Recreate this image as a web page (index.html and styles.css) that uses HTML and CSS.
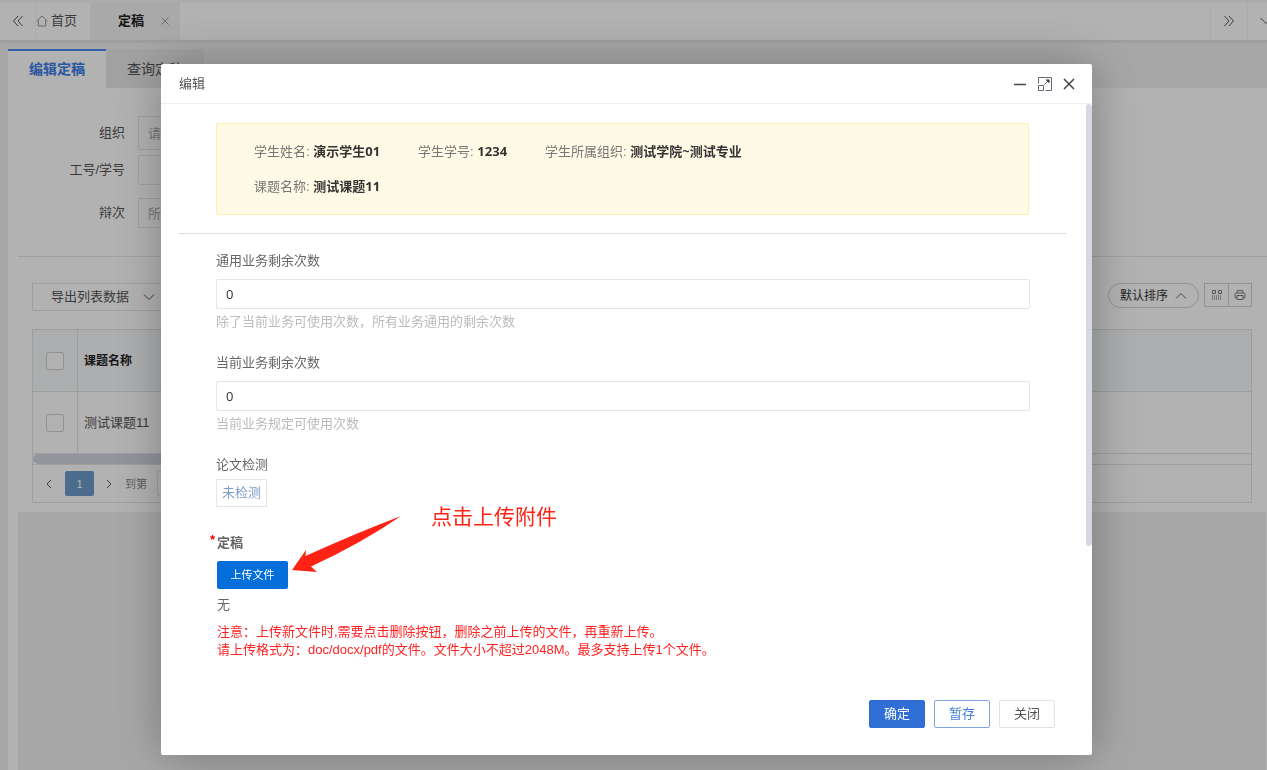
FILE: index.html
```html
<!DOCTYPE html>
<html lang="zh-CN">
  <head>
    <meta charset="UTF-8" />
    <meta name="viewport" content="width=device-width, initial-scale=1.0" />
    <title>定稿</title>
    <link rel="stylesheet" href="styles.css">
  </head>
  <body>
    <header class="topbar">
      <button type="button" class="nav-btn" aria-label="向左">
        <svg width="12" height="12" viewBox="0 0 12 12"><path d="M6 1L1.5 6L6 11M10.5 1L6 6l4.5 5" /></svg>
      </button>
      <a href="#" class="page-tab home">
        <svg width="12" height="12" viewBox="0 0 12 12"><path d="M.5 6.2L6 1l5.5 5.2M2.3 5v6h7.4V5" /></svg>
        首页
      </a>
      <a href="#" class="page-tab current">
        定稿
        <svg width="8" height="8" viewBox="0 0 8 8"><path d="M.5.5l7 7M7.5.5l-7 7" /></svg>
      </a>
      <div class="topbar-end">
        <button type="button" class="nav-btn" aria-label="向右">
          <svg width="12" height="12" viewBox="0 0 12 12"><path d="M1.5 1L6 6l-4.500 5M6 1l4.500 5L6 11" /></svg>
        </button>
        <button type="button" class="nav-btn more" aria-label="更多">
          <svg width="12" height="12" viewBox="0 0 12 12"><path d="M.5 3L6 8.500L11.500 3" /></svg>
        </button>
      </div>
    </header>

    <main>
      <nav class="tabs">
        <a href="#" class="tab active">编辑定稿</a>
        <a href="#" class="tab">查询定稿</a>
      </nav>

      <div class="panel">
        <form class="search">
          <div class="search-row tall">
            <label for="org">组织</label>
            <input type="text" id="org" placeholder="请选择" />
          </div>
          <div class="search-row number">
            <label for="number">工号/学号</label>
            <input type="text" id="number" />
          </div>
          <div class="search-row">
            <label for="round">辩次</label>
            <input type="text" id="round" placeholder="所有" />
          </div>
        </form>

        <div class="list">
          <div class="toolbar">
            <button type="button" class="export">
              导出列表数据
              <svg width="12" height="12" viewBox="0 0 12 12"><path d="M1 3.500l5 5l5-5" /></svg>
            </button>
            <div class="toolbar-end">
              <button type="button" class="sort">
                默认排序
                <svg width="12" height="12" viewBox="0 0 12 12"><path d="M1 8.500l5-5l5 5" /></svg>
              </button>
              <div class="icon-group">
                <button type="button" aria-label="筛选列">
                  <svg width="10" height="10" viewBox="0 0 10 10"><path d="M.5.5h3v3h-3zM6.500.5h3v3h-3z" /><path class="bars" d="M.5 5v5M2.500 5v5M4.500 5v5M6.500 5v5M8.500 5v5" /></svg>
                </button>
                <button type="button" aria-label="打印">
                  <svg width="12" height="12" viewBox="0 0 12 12"><path d="M3 4V2.500Q3 1.500 4 1.500h4q1 0 1 1V4M3 9H2Q1 9 1 8V5.500Q1 4 2.500 4h7Q11 4 11 5.500V8q0 1-1 1H9M3 6.500h6V10q0 .5-.5.5h-5Q3 10.500 3 10z" /></svg>
                </button>
              </div>
            </div>
          </div>

          <table>
            <thead>
              <tr>
                <th class="check"><input type="checkbox" aria-label="全选" /></th>
                <th>课题名称</th>
              </tr>
            </thead>
            <tbody>
              <tr>
                <td class="check"><input type="checkbox" aria-label="选择" /></td>
                <td>测试课题11</td>
              </tr>
            </tbody>
          </table>
          <div class="hscroll"><div class="hscroll-thumb"></div></div>
          <div class="pager">
            <button type="button" aria-label="上一页">
              <svg width="8" height="10" viewBox="0 0 8 10"><path d="M6 1L2 5l4 4" /></svg>
            </button>
            <button type="button" class="page">1</button>
            <button type="button" aria-label="下一页">
              <svg width="8" height="10" viewBox="0 0 8 10"><path d="M2 1l4 4l-4 4" /></svg>
            </button>
            <label for="goto">到第</label>
            <input type="text" id="goto" />
          </div>
        </div>
      </div>
    </main>

    <div class="shade">
      <section class="dialog" role="dialog" aria-labelledby="dialogTitle">
        <header class="dialog-head">
          <h2 id="dialogTitle">编辑</h2>
          <button type="button" aria-label="最小化">
            <svg width="14" height="14" viewBox="0 0 14 14"><path d="M1 7.500h12" /></svg>
          </button>
          <button type="button" aria-label="最大化" class="maximize">
            <svg width="14" height="14" viewBox="0 0 14 14"><path d="M.5 6.500v-6h13v13h-6M.5 8.500h5v5h-5zM6.500 7.500l4-4" /><path class="fill" d="M7.500 2.500h4v4z" /></svg>
          </button>
          <button type="button" aria-label="关闭">
            <svg width="12" height="12" viewBox="0 0 12 12"><path d="M1 1l10 10M11 1L1 11" /></svg>
          </button>
        </header>

        <form class="dialog-body" id="editForm">
          <div class="student">
            <span>学生姓名: <b>演示学生01</b></span>
            <span>学生学号: <b>1234</b></span>
            <span>学生所属组织: <b>测试学院~测试专业</b></span>
            <span class="topic">课题名称: <b>测试课题11</b></span>
          </div>
          <hr />
          <div class="field">
            <label for="common">通用业务剩余次数</label>
            <input type="text" id="common" value="0" />
            <p class="hint">除了当前业务可使用次数，所有业务通用的剩余次数</p>
          </div>
          <div class="field">
            <label for="current">当前业务剩余次数</label>
            <input type="text" id="current" value="0" />
            <p class="hint">当前业务规定可使用次数</p>
          </div>
          <div class="field">
            <label for="check">论文检测</label>
            <button type="button" id="check" class="check-state">未检测</button>
          </div>
          <div class="upload">
            <label for="upload" class="required">定稿</label>
            <button type="button" id="upload" class="upload-btn">上传文件</button>
            <p class="empty">无</p>
            <p class="notice">注意：上传新文件时,需要点击删除按钮，删除之前上传的文件，再重新上传。<br />请上传格式为：doc/docx/pdf的文件。文件大小不超过2048M。最多支持上传1个文件。</p>
            <div class="callout">
              <svg width="110" height="58" viewBox="0 0 110 58"><path d="M0 55L14 35L13.500 41Q62 19 109 1Q70 28 19 51.500L25 57Z" /></svg>
              <span>点击上传附件</span>
            </div>
          </div>
        </form>
        <div class="scroll-thumb"></div>

        <footer class="dialog-foot">
          <button type="submit" form="editForm" class="btn primary">确定</button>
          <button type="button" class="btn outline">暂存</button>
          <button type="button" class="btn">关闭</button>
        </footer>
      </section>
    </div>
  </body>
</html>
```

FILE: styles.css
```css
* {
  box-sizing: border-box;
}
body {
  margin: 0;
  min-height: 100vh;
  display: flex;
  flex-direction: column;
  overflow: hidden;
  background-color: #f0f0f0;
  color: #555;
  font-family: "Liberation Sans", "Noto Sans CJK SC", sans-serif;
  font-size: 13px;
  line-height: 18px;
}
button,
input {
  font: inherit;
  color: inherit;
}
button {
  padding: 0;
  border: none;
  background: none;
  cursor: pointer;
}
input {
  border: 1px solid #e6e6e6;
  border-radius: 2px;
  background-color: #fff;
}
a {
  color: inherit;
  text-decoration: none;
}
p,
h2 {
  margin: 0;
}
svg {
  display: block;
  flex: none;
  fill: none;
  stroke: currentColor;
}

/* top bar */
.topbar {
  display: flex;
  height: 41px;
  padding-top: 2px;
  background-color: #fff;
  border-bottom: 1px solid #e2e2e2;
  box-shadow: 0 1px 2px rgba(0, 0, 0, 0.1), inset 0 3px 0 #f6f6f6;
}
.nav-btn {
  display: flex;
  align-items: center;
  justify-content: center;
  width: 36px;
  border-right: 1px solid #f6f6f6;
}
.page-tab {
  display: flex;
  align-items: center;
}
.home {
  width: 54px;
  gap: 3px;
}
.home svg,
.current svg {
  color: #999;
}
.current {
  width: 90px;
  padding-left: 28px;
  gap: 17px;
  background-color: #f3f3f3;
  color: #222;
  font-weight: bold;
}
.topbar-end {
  display: flex;
  margin-left: auto;
  width: 57px;
  overflow: hidden;
}
.topbar-end .nav-btn {
  flex: none;
  width: 37px;
  border-right: none;
  border-left: 1px solid #f6f6f6;
}

/* page */
main {
  flex: 1;
  display: flex;
  flex-direction: column;
  padding: 8px 0 0 8px;
}
.tabs {
  display: flex;
}
.tab {
  height: 39px;
  padding: 0 21px;
  line-height: 40px;
  font-size: 14px;
  background-color: #e8e8e8;
}
.tab.active {
  background-color: #fff;
  box-shadow: inset 0 2px 0 #4a8af0;
  color: #3a7ce8;
  font-weight: bold;
}
.panel {
  flex: 1;
  display: flex;
  flex-direction: column;
  padding-left: 10px;
  background-color: #fff;
}
.panel::after {
  content: "";
  flex: 1;
  margin-right: 1px;
  background-color: #f0f0f0;
}
.search {
  padding: 28px 0;
  border-bottom: 1px solid #e6e6e6;
}
.search-row {
  display: flex;
  align-items: center;
  gap: 13px;
}
.search-row label {
  width: 107px;
  text-align: right;
}
.search-row input {
  width: 190px;
  height: 30px;
  padding: 0 9px;
}
.search-row.tall input {
  height: 34px;
}
.search-row.number {
  margin: 5px 0 13px;
}
.search-row ::placeholder {
  color: #aaa;
}
.list {
  padding: 26px 15px 9px 14px;
}
.toolbar {
  display: flex;
  justify-content: space-between;
  margin-bottom: 18px;
}
.export {
  display: flex;
  align-items: center;
  gap: 14px;
  height: 28px;
  padding: 0 18px;
  border: 1px solid #e2e2e2;
}
.toolbar-end {
  display: flex;
  gap: 5px;
}
.sort {
  display: flex;
  align-items: center;
  gap: 7px;
  height: 25px;
  padding: 0 11px;
  border: 1px solid #d2d2d2;
  border-radius: 13px;
  color: #333;
  font-size: 12px;
}
.sort svg {
  color: #666;
}
.icon-group {
  display: flex;
  height: 24px;
  border: 1px solid #d2d2d2;
  color: #777;
}
.icon-group button {
  display: flex;
  align-items: center;
  justify-content: center;
  width: 23px;
}
.icon-group button + button {
  border-left: 1px solid #d2d2d2;
}
.bars {
  opacity: 0.6;
}
table {
  width: 100%;
  border: 1px solid #e2e2e2;
  border-collapse: collapse;
}
th,
td {
  height: 62px;
  padding: 0 6px;
  border-bottom: 1px solid #e2e2e2;
  text-align: left;
}
th {
  background-color: #f6f9fc;
  color: #222;
  font-size: 12px;
}
.check {
  width: 45px;
  border-right: 1px solid #e2e2e2;
  text-align: center;
}
.check input {
  appearance: none;
  display: block;
  width: 18px;
  height: 18px;
  margin: 0 auto;
  border-color: #d2d2d2;
}
.hscroll {
  height: 11px;
  border: 1px solid #e2e2e2;
  border-top: none;
}
.hscroll-thumb {
  width: 60%;
  height: 10px;
  border-radius: 5px;
  background-color: #d4d4e0;
}
.pager {
  display: flex;
  align-items: center;
  height: 38px;
  padding-left: 12px;
  border: 1px solid #e2e2e2;
  border-top: none;
  font-size: 11px;
}
.pager .page {
  width: 29px;
  height: 25px;
  margin: 0 11px 0 12px;
  border-radius: 2px;
  background-color: #6c9bca;
  color: #fff;
}
.pager label {
  margin: 0 10px 0 12px;
  color: #888;
}
.pager input {
  width: 40px;
  height: 25px;
}

/* dialog */
.shade {
  position: fixed;
  inset: 0;
  display: flex;
  padding: 64px 175px 15px 161px;
  background-color: rgba(0, 0, 0, 0.3);
}
.dialog {
  position: relative;
  flex: 1;
  display: flex;
  flex-direction: column;
  background-color: #fff;
  border-radius: 2px;
  box-shadow: 1px 1px 50px rgba(0, 0, 0, 0.3);
}
.dialog-head {
  display: flex;
  align-items: center;
  gap: 11px;
  height: 40px;
  padding: 0 17px 0 18px;
  border-bottom: 1px solid #f0f0f0;
}
.dialog-head h2 {
  flex: 1;
  font-size: 13px;
  font-weight: normal;
}
.dialog-head svg {
  color: #444;
  stroke-width: 1.5;
}
.dialog-head .maximize svg {
  color: #667;
  stroke-width: 1;
}
.dialog-head .fill {
  fill: #333;
  stroke: none;
}
.dialog-body {
  flex: 1;
  padding: 19px 55px 0;
  color: #666;
}
.student {
  display: flex;
  flex-wrap: wrap;
  column-gap: 38px;
  margin-right: 8px;
  padding: 10px 37px;
  border: 1px solid #ffecb0;
  border-radius: 2px;
  background-color: #fffae6;
  line-height: 35px;
  color: #777;
}
.student b {
  color: #333;
  font-family: "Open Sans", "Noto Sans CJK SC", sans-serif;
}
.topic {
  width: 100%;
}
hr {
  margin: 18px -29px 18px -37px;
  border: none;
  border-top: 1px solid #ddd;
}
.field {
  margin: 0 7px 23px 0;
}
.field label,
.upload label {
  display: block;
  margin-bottom: 9px;
}
.field input {
  display: block;
  width: 100%;
  height: 30px;
  padding: 0 9px;
  color: #333;
  font-family: "Open Sans", sans-serif;
}
.hint {
  margin-top: 4px;
  color: #bbb;
}
.check-state {
  height: 28px;
  margin-top: -4px;
  padding: 0 5px;
  border: 1px solid #e6e6e6;
  color: #7d9cc9;
}
.upload {
  position: relative;
  margin-top: 27px;
  padding-left: 1px;
}
.required {
  font-weight: bold;
}
.required::before {
  content: "*";
  position: absolute;
  left: -6px;
  top: -3px;
  color: #f00;
}
.upload-btn {
  width: 71px;
  height: 28px;
  border-radius: 2px;
  background-color: #046fdb;
  color: #fff;
  font-size: 11px;
}
.empty {
  margin: 7px 0 9px;
}
.notice {
  color: #f22;
}
.callout {
  position: absolute;
  left: 76px;
  top: -19px;
  display: flex;
  gap: 29px;
  color: #ff2316;
  font-size: 21px;
  line-height: 4px;
}
.callout path {
  fill: currentColor;
  stroke: none;
}
.scroll-thumb {
  position: absolute;
  top: 40px;
  right: 0;
  width: 6px;
  height: 64%;
  border-radius: 3px;
  background-color: #d6d9e3;
}
.dialog-foot {
  display: flex;
  justify-content: flex-end;
  gap: 9px;
  padding: 0 37px 27px;
}
.btn {
  width: 56px;
  height: 28px;
  border: 1px solid #e2e2e2;
  border-radius: 2px;
}
.btn.primary {
  border-color: #2f6fd5;
  background-color: #2f6fd5;
  color: #fff;
}
.btn.outline {
  border-color: #7fa6e3;
  color: #4a80d9;
}
```
